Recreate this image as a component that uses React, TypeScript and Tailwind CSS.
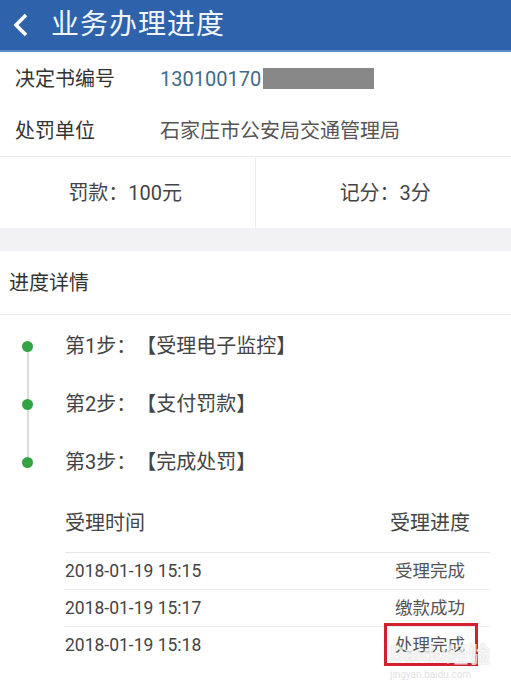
const rows = [
  { time: "2018-01-19 15:15", status: "受理完成" },
  { time: "2018-01-19 15:17", status: "缴款成功" },
  { time: "2018-01-19 15:18", status: "处理完成", marked: true },
];

const steps = ["第1步：【受理电子监控】", "第2步：【支付罚款】", "第3步：【完成处罚】"];

export default function App() {
  return (
    <main
      className="w-[511px] h-[690px] overflow-hidden bg-white text-[#333] [text-spacing-trim:space-all]"
      style={{ fontFamily: "Roboto, 'Noto Sans CJK SC', sans-serif" }}
    >
      <header className="h-[52px] bg-[#2e62ab] border-b-2 border-[#5d8cc8] flex items-center">
        <svg width="20" height="26" viewBox="0 0 20 26" className="ml-[11px]">
          <path d="M15 3 L5 13 L15 23" fill="none" stroke="#fff" strokeWidth="3.6" />
        </svg>
        <h1 className="ml-[20px] text-[28px] text-[#f2f6fb] leading-none tracking-[1px]">业务办理进度</h1>
      </header>

      <section>
        <div className="h-[53px] flex items-center px-[15px] text-[20px]">
          <span className="w-[145px]">决定书编号</span>
          <span className="text-[#3f6b88]">130100170</span>
          <span className="w-[111px] h-[21px] bg-[#888] ml-[2px]" />
        </div>
        <div className="h-[52px] flex items-center px-[15px] text-[20px] border-b border-[#ececec]">
          <span className="w-[145px]">处罚单位</span>
          <span className="text-[#555]">石家庄市公安局交通管理局</span>
        </div>
        <div className="h-[71px] grid grid-cols-2 text-[20px] text-[#444]">
          <div className="flex items-center justify-center border-r border-[#ececec] pr-[4px]">罚款：100元</div>
          <div className="flex items-center justify-center pl-[4px]">记分：3分</div>
        </div>
      </section>

      <div className="h-[23px] bg-[#f2f2f4]" />

      <section>
        <div className="h-[64px] flex items-center px-[9px] text-[20px] border-b border-[#ececec]">进度详情</div>

        <div className="relative pt-[2px]">
          <div className="absolute left-[27px] top-[32px] h-[116px] w-[2px] bg-[#dcdcdc]" />
          {steps.map((s) => (
            <div key={s} className="relative h-[58px] flex items-center text-[20px] text-[#444]">
              <span className="w-[11px] h-[11px] rounded-full bg-[#34a344] ml-[22px]" />
              <span className="ml-[32px]">{s}</span>
            </div>
          ))}
        </div>

        <div className="ml-[65px] w-[425px]">
          <div className="h-[62px] flex items-center text-[20px] text-[#444] border-b border-[#e6e6e6]">
            <span className="flex-1 pt-[2px]">受理时间</span>
            <span className="w-[120px] text-center pt-[2px]">受理进度</span>
          </div>
          {rows.map((r) => (
            <div
              key={r.time}
              className="h-[37px] flex items-center text-[17.5px] text-[#444] border-b border-[#ececec] last:border-b-0"
            >
              <span className="flex-1">{r.time}</span>
              <span className="w-[120px] flex justify-center text-[#555]">
                <span className={r.marked ? "relative" : ""}>
                  {r.status}
                  {r.marked && (
                    <span className="absolute -left-[11px] -right-[13px] -top-[9px] -bottom-[7px] border-[3px] border-[#d3202c]" />
                  )}
                </span>
              </span>
            </div>
          ))}
        </div>
      </section>

      <div className="relative">
        <span className="absolute left-[390px] -top-[20px] text-[22px] font-bold text-white/75 [text-shadow:0_0_2px_rgba(0,0,0,0.2)] leading-none">
          Baidu经验
        </span>
        <span className="absolute left-[390px] top-[6px] text-[10px] text-[#e2e2e2] leading-none">
          jingyan.baidu.com
        </span>
      </div>
    </main>
  );
}
